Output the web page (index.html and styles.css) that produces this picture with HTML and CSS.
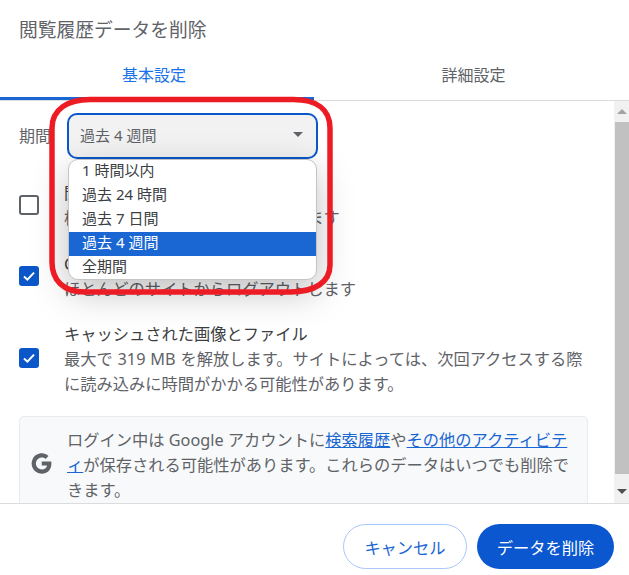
FILE: index.html
```html
<!DOCTYPE html>
<html lang="ja">
<head>
<meta charset="utf-8">
<title>閲覧履歴データを削除</title>
<link rel="stylesheet" href="styles.css">
</head>
<body>
<div class="dialog">
  <h1 class="title">閲覧履歴データを削除</h1>
  <div class="tabs">
    <div class="tab active">基本設定</div>
    <div class="tab">詳細設定</div>
  </div>
  <div class="main">
    <div class="content">
      <div class="period">
        <span class="period-label">期間</span>
        <div class="select"><span>過去 4 週間</span><i class="caret"></i></div>
      </div>
      <div class="row first">
        <span class="check"></span>
        <div class="row-text">
          <div class="row-title">閲覧履歴</div>
          <div>検索ボックスの履歴と候補を消します</div>
        </div>
      </div>
      <div class="row second">
        <span class="check on"><svg viewBox="0 0 20 20" width="20" height="20"><path d="M5 10.5l3.4 3.2L15 6.600" fill="none" stroke="#fff" stroke-width="2"/></svg></span>
        <div class="row-text">
          <div class="row-title">Cookie と他のサイトデータ</div>
          <div>ほとんどのサイトからログアウトします</div>
        </div>
      </div>
      <div class="row third">
        <span class="check on"><svg viewBox="0 0 20 20" width="20" height="20"><path d="M5 10.5l3.4 3.2L15 6.600" fill="none" stroke="#fff" stroke-width="2"/></svg></span>
        <div class="row-text">
          <div class="row-title">キャッシュされた画像とファイル</div>
          <div>最大で 319 MB を解放します。サイトによっては、次回アクセスする際に読み込みに時間がかかる可能性があります。</div>
        </div>
      </div>
      <div class="info">
        <svg class="g-icon" viewBox="0 0 48 48" width="21" height="21"><path fill="#5f6368" d="M24.500 19.500v9.300h12.200c-.5 2.800-2 5-4.200 6.500-2 1.400-4.700 2.200-7.900 2.200-6 0-11-4-12.800-9.500-.4-1.300-.7-2.700-.7-4.100s.3-2.800.7-4.100C13.600 14.300 18.600 10.300 24.600 10.300c3.300 0 6.300 1.100 8.600 3.400l6.800-6.800C35.800 3 30.600 .8 24.600 .8 15.500 .8 7.700 6 3.900 13.500 2.300 16.700 1.400 20.200 1.400 24s.9 7.300 2.500 10.500C7.700 42 15.500 47.200 24.600 47.200c6.200 0 11.400-2 15.200-5.600 4.400-4 6.800-9.900 6.800-16.900 0-1.800-.1-3.600-.4-5.200z"/></svg>
        <p>ログイン中は Google アカウントに<a href="#">検索履歴</a>や<a href="#">その他のアクティビティ</a>が保存される可能性があります。これらのデータはいつでも削除できます。</p>
      </div>
    </div>
    <div class="scrollbar">
      <div class="arrow"><i class="tri up"></i></div>
      <div class="thumb"></div>
      <div class="arrow low"><i class="tri down"></i></div>
    </div>
  </div>
  <div class="footer">
    <button class="btn cancel">キャンセル</button>
    <button class="btn primary">データを削除</button>
  </div>
</div>
<ul class="menu">
  <li>1 時間以内</li>
  <li>過去 24 時間</li>
  <li>過去 7 日間</li>
  <li class="selected">過去 4 週間</li>
  <li>全期間</li>
</ul>
<svg class="ring" width="629" height="575" viewBox="0 0 629 575"><path d="M90 99.500H293C316 99.500 330 109 330 128V265C330 282 315 292 290 292H85C63 292 52 280 52 262V128C52 109 68 99.500 90 99.500Z" fill="none" stroke="#ed1c24" stroke-width="5.500"/></svg>
</body>
</html>
```
FILE: styles.css
```css
* { box-sizing: border-box; }
html, body { margin: 0; height: 575px; overflow: hidden; background: #fff; }
body { font-family: "Noto Sans", "Noto Sans CJK JP", sans-serif; font-size: 16.25px; color: #5f6368; position: relative; }
.dialog { width: 629px; height: 575px; display: flex; flex-direction: column; }
.title { margin: 0; height: 60px; padding: 17px 0 0 19px; font-size: 18.75px; line-height: 26px; font-weight: 400; color: #5f6368; }
.tabs { display: flex; height: 41px; border-bottom: 1px solid #dadce0; }
.tab { flex: 0 0 314px; height: 40px; padding: 3px 6px 0 0; text-align: center; line-height: 25px; font-size: 16px; }
.tab + .tab { flex: 1; padding: 3px 1px 0 5px; }
.tab.active { color: #1a73e8; border-bottom: 3px solid #1a66d2; }
.main { flex: 1; min-height: 0; display: flex; }
.content { flex: 1; min-width: 0; overflow: hidden; }
.period { display: flex; align-items: center; height: 47px; margin: 11px 0 0 19px; }
.period-label { width: 48px; font-size: 16px; padding-bottom: 2px; }
.select { width: 251px; height: 46px; padding: 0 13px 2px 11px; display: flex; align-items: center; justify-content: space-between; background: #f2f2f2; border: 2px solid #0b57c9; border-radius: 10px; font-size: 15px; }
.caret { width: 0; height: 0; border: 5px solid transparent; border-top-color: #5f6368; border-bottom: 0; }
.row { display: flex; align-items: center; padding-left: 19px; line-height: 25px; }
.row.first { margin-top: 22px; }
.row.second { margin-top: 21px; }
.row.third { margin-top: 20px; }
.check { flex: none; width: 20px; height: 20px; margin: -2px 25px 0 0; border: 2px solid #5f6368; border-radius: 3px; }
.third .check { margin-top: -4px; }
.check.on { background: #0b57c9; border: 0; }
.check svg { display: block; }
.row-text { flex: 1; padding-right: 30px; word-spacing: .6px; }
.row-title { color: #3c4043; }
.info { display: flex; align-items: flex-start; margin: 19px 26px 0 19px; height: 100px; padding: 0 16px 0 11px; background: #f8f9fa; border: 1px solid #e8eaed; border-radius: 5px; line-height: 25px; }
.info p { margin: 0; padding: 11px 0 0 15px; }
.g-icon { flex: none; margin-top: 36px; }
.info a { color: #1a66d2; text-decoration: underline; }
.scrollbar { flex: none; width: 15px; background: #f1f1f1; display: flex; flex-direction: column; }
.arrow { height: 21px; display: flex; align-items: center; justify-content: center; }
.arrow.low { height: 29px; padding-top: 6px; }
.thumb { flex: 1; margin: 0 0 0 1px; background: #c1c1c1; }
.tri { width: 0; height: 0; border: 5px solid transparent; }
.tri.up { border-bottom-color: #a3a3a3; border-top: 0; }
.tri.down { border-top-color: #505050; border-bottom: 0; }
.footer { flex: none; height: 72px; border-top: 1px solid #dadce0; display: flex; justify-content: flex-end; gap: 10px; padding: 20px 15px 0 0; }
.btn { height: 45px; border-radius: 23px; font: inherit; font-size: 16.25px; padding: 0; }
.cancel { width: 124px; background: #fff; color: #1a66d2; border: 1px solid #a8c7fa; }
.primary { width: 137px; background: #0b57d0; color: #fff; border: 0; }
.menu { position: absolute; left: 68px; top: 159px; width: 249px; height: 121px; margin: 0; padding: 0; list-style: none; background: #fff; border: 1px solid #c4c4c4; border-radius: 10px; overflow: hidden; box-shadow: 0 12px 36px rgba(0,0,0,.25); font-size: 15px; line-height: 20px; color: #3c4043; }
.menu li { height: 24px; padding-left: 13px; }
.menu li.selected { background: #1a66d2; color: #fff; }
.ring { position: absolute; left: 0; top: 0; pointer-events: none; }
```
